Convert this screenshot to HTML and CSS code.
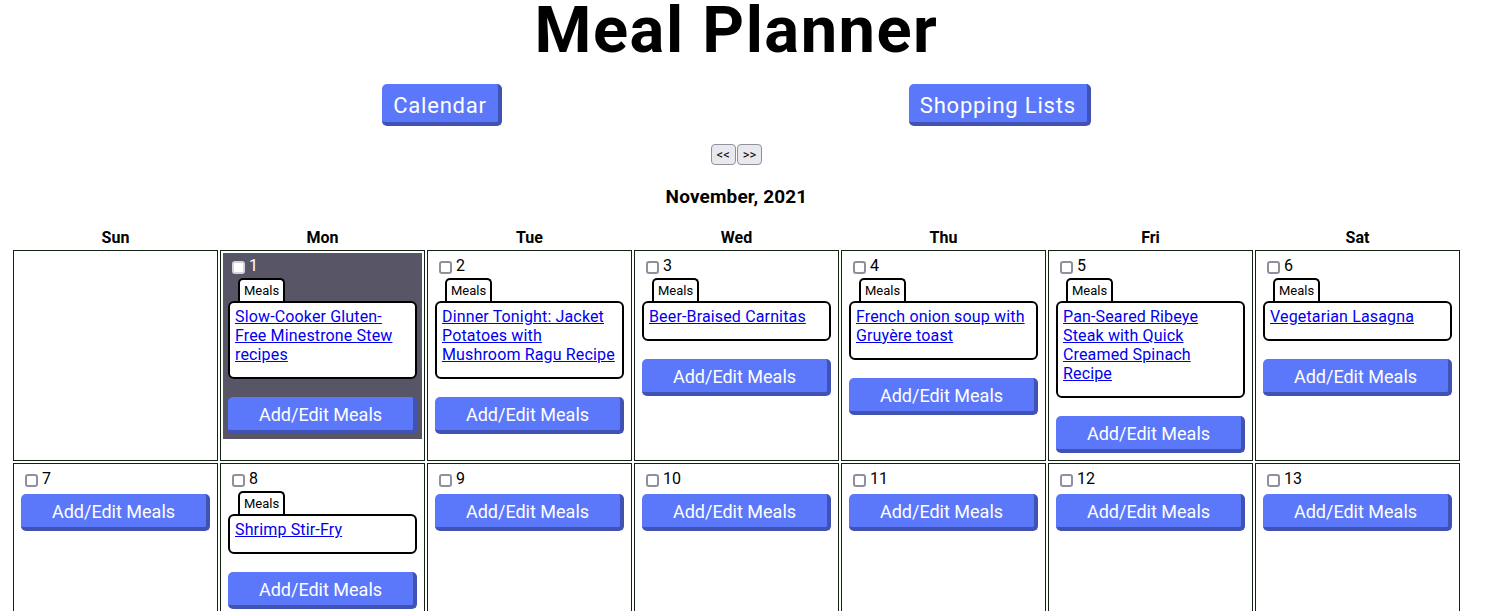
FILE: index.html
```html
<!DOCTYPE html>
<html lang="en">
<head>
<meta charset="utf-8">
<title>Meal Planner</title>
<link rel="stylesheet" href="styles.css">
</head>
<body>
<div class="page">
  <h1 class="title">Meal Planner</h1>
  <nav class="tabs">
    <button class="btn btn-lg">Calendar</button>
    <button class="btn btn-lg">Shopping Lists</button>
  </nav>
  <div class="pager">
    <button class="pager-btn">&lt;&lt;</button>
    <button class="pager-btn">&gt;&gt;</button>
  </div>
  <h3 class="month">November, 2021</h3>
  <table class="cal">
    <thead>
      <tr><th>Sun</th><th>Mon</th><th>Tue</th><th>Wed</th><th>Thu</th><th>Fri</th><th>Sat</th></tr>
    </thead>
    <tbody>
      <tr>
        <td></td>
        <td><div class="day today">
          <div class="day-head"><input type="checkbox" class="chk"><span class="num">1</span></div>
          <div class="tab">Meals</div>
          <div class="meals"><a href="#">Slow-Cooker Gluten-Free Minestrone Stew recipes</a></div>
          <button class="btn add">Add/Edit Meals</button>
        </div></td>
        <td><div class="day">
          <div class="day-head"><input type="checkbox" class="chk"><span class="num">2</span></div>
          <div class="tab">Meals</div>
          <div class="meals"><a href="#">Dinner Tonight: Jacket Potatoes with Mushroom Ragu Recipe</a></div>
          <button class="btn add">Add/Edit Meals</button>
        </div></td>
        <td><div class="day">
          <div class="day-head"><input type="checkbox" class="chk"><span class="num">3</span></div>
          <div class="tab">Meals</div>
          <div class="meals"><a href="#">Beer-Braised Carnitas</a></div>
          <button class="btn add">Add/Edit Meals</button>
        </div></td>
        <td><div class="day">
          <div class="day-head"><input type="checkbox" class="chk"><span class="num">4</span></div>
          <div class="tab">Meals</div>
          <div class="meals"><a href="#">French onion soup with Gruyère toast</a></div>
          <button class="btn add">Add/Edit Meals</button>
        </div></td>
        <td><div class="day">
          <div class="day-head"><input type="checkbox" class="chk"><span class="num">5</span></div>
          <div class="tab">Meals</div>
          <div class="meals"><a href="#">Pan-Seared Ribeye Steak with Quick Creamed Spinach Recipe</a></div>
          <button class="btn add">Add/Edit Meals</button>
        </div></td>
        <td><div class="day">
          <div class="day-head"><input type="checkbox" class="chk"><span class="num">6</span></div>
          <div class="tab">Meals</div>
          <div class="meals"><a href="#">Vegetarian Lasagna</a></div>
          <button class="btn add">Add/Edit Meals</button>
        </div></td>
      </tr>
      <tr>
        <td><div class="day">
          <div class="day-head"><input type="checkbox" class="chk"><span class="num">7</span></div>
          <button class="btn add">Add/Edit Meals</button>
        </div></td>
        <td><div class="day">
          <div class="day-head"><input type="checkbox" class="chk"><span class="num">8</span></div>
          <div class="tab">Meals</div>
          <div class="meals"><a href="#">Shrimp Stir-Fry</a></div>
          <button class="btn add">Add/Edit Meals</button>
        </div></td>
        <td><div class="day">
          <div class="day-head"><input type="checkbox" class="chk"><span class="num">9</span></div>
          <button class="btn add">Add/Edit Meals</button>
        </div></td>
        <td><div class="day">
          <div class="day-head"><input type="checkbox" class="chk"><span class="num">10</span></div>
          <button class="btn add">Add/Edit Meals</button>
        </div></td>
        <td><div class="day">
          <div class="day-head"><input type="checkbox" class="chk"><span class="num">11</span></div>
          <button class="btn add">Add/Edit Meals</button>
        </div></td>
        <td><div class="day">
          <div class="day-head"><input type="checkbox" class="chk"><span class="num">12</span></div>
          <button class="btn add">Add/Edit Meals</button>
        </div></td>
        <td><div class="day">
          <div class="day-head"><input type="checkbox" class="chk"><span class="num">13</span></div>
          <button class="btn add">Add/Edit Meals</button>
        </div></td>
      </tr>
    </tbody>
  </table>
</div>
</body>
</html>
```

FILE: styles.css
```css
html, body {
  background: #fff;
}
body {
  margin: 0 8px 8px;
  font-family: Roboto, "Liberation Sans", sans-serif;
  color: #000;
}
.page {
  width: 1457px;
}
.title {
  margin: 0;
  text-align: center;
  font-size: 65px;
  letter-spacing: 1.5px;
  font-weight: 700;
  line-height: 61px;
}
.tabs {
  display: flex;
  justify-content: center;
  gap: 407px;
  margin-top: 23px;
}
.btn {
  font-family: Roboto, "Liberation Sans", sans-serif;
  background: #5c78fa;
  color: #fff;
  border: 0;
  border-right: 4px solid #4152b5;
  border-bottom: 4px solid #4152b5;
  border-radius: 5px;
  cursor: pointer;
}
.btn-lg {
  height: 42px;
  padding: 4px 11px 0;
  font-size: 22px;
  letter-spacing: 0.8px;
}
.pager {
  display: flex;
  justify-content: center;
  gap: 1px;
  margin-top: 18px;
}
.pager-btn {
  height: 21px;
  padding: 0 5px;
  font-family: Roboto, "Liberation Sans", sans-serif;
  font-size: 13px;
  color: #000;
  background: #e9e9ed;
  border: 1px solid #8f8f9d;
  border-radius: 4px;
}
.month {
  margin: 21px 0 0;
  text-align: center;
  font-size: 19px;
  letter-spacing: 0.15px;
  line-height: 22px;
  font-weight: 700;
}
.cal {
  width: 1451px;
  margin: 17px auto 0;
  table-layout: fixed;
  border-collapse: separate;
  border-spacing: 2px;
}
.cal th {
  padding: 1px;
  font-size: 16px;
  line-height: 19px;
  font-weight: 700;
  text-align: center;
}
.cal td {
  border: 1px solid #132313;
  padding: 2px;
  vertical-align: top;
}
.day {
  padding: 5px;
}
.day.today {
  background: #585566;
  color: #fff;
}
.day-head {
  display: flex;
  align-items: flex-start;
  height: 20px;
}
.chk {
  appearance: none;
  -webkit-appearance: none;
  box-sizing: border-box;
  width: 13px;
  height: 13px;
  margin: 3px 4px 0 4px;
  background: #fff;
  border: 2px solid #8f8f9d;
  border-radius: 3px;
}
.today .chk {
  border-color: #d4d4dc;
}
.num {
  font-size: 16px;
  line-height: 16px;
}
.tab {
  width: fit-content;
  margin-left: 10px;
  padding: 0 4px;
  background: #fff;
  color: #000;
  border: 2px solid #000;
  border-bottom: 0;
  border-radius: 5px 5px 0 0;
  font-size: 13px;
  line-height: 21px;
}
.meals {
  background: #fff;
  border: 2px solid #000;
  border-radius: 6px;
  padding: 4px 6px 13px 5px;
  font-size: 16px;
  line-height: 19px;
  letter-spacing: 0.15px;
}
.meals a {
  color: #0000ee;
  text-decoration: underline;
}
.add {
  display: block;
  width: 100%;
  height: 37px;
  margin-top: 3px;
  padding: 2px 0 0;
  font-size: 18px;
}
.meals + .add {
  margin-top: 18px;
}
```
